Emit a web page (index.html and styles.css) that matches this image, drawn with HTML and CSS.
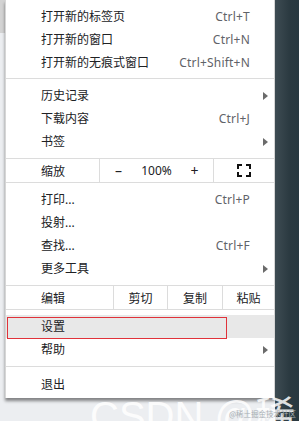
FILE: index.html
```html
<!DOCTYPE html>
<html lang="zh">
<head>
<meta charset="utf-8">
<link rel="stylesheet" href="styles.css">
</head>
<body>
<div class="screen">
  <div class="side-left"></div>
  <div class="main">
    <div class="menu">
      <div class="item"><span class="label">打开新的标签页</span><span class="key">Ctrl+T</span></div>
      <div class="item"><span class="label">打开新的窗口</span><span class="key">Ctrl+N</span></div>
      <div class="item"><span class="label">打开新的无痕式窗口</span><span class="key">Ctrl+Shift+N</span></div>
      <div class="sep"></div>
      <div class="item sub"><span class="label">历史记录</span><span class="arrow"></span></div>
      <div class="item"><span class="label">下载内容</span><span class="key">Ctrl+J</span></div>
      <div class="item sub"><span class="label">书签</span><span class="arrow"></span></div>
      <div class="row zoom">
        <div class="cell first">缩放</div>
        <div class="cell zoomctl"><span>–</span><span>100%</span><span>+</span></div>
        <div class="cell full">
          <svg width="14" height="13" viewBox="0 0 14 13"><path d="M1 5V1h4M9 1h4v4M13 8v4H9M5 12H1V8" fill="none" stroke="#111" stroke-width="2"/></svg>
        </div>
      </div>
      <div class="item"><span class="label">打印...</span><span class="key">Ctrl+P</span></div>
      <div class="item"><span class="label">投射...</span></div>
      <div class="item"><span class="label">查找...</span><span class="key">Ctrl+F</span></div>
      <div class="item sub"><span class="label">更多工具</span><span class="arrow"></span></div>
      <div class="row edit">
        <div class="cell first">编辑</div>
        <div class="cell c1">剪切</div>
        <div class="cell c2">复制</div>
        <div class="cell c3">粘贴</div>
      </div>
      <div class="item active"><span class="label">设置</span><span class="mark"></span></div>
      <div class="item sub"><span class="label">帮助</span><span class="arrow"></span></div>
      <div class="sep last"></div>
      <div class="item"><span class="label">退出</span></div>
    </div>
  </div>
  <div class="side-right"></div>
  <div class="wm-big">CSDN @稀土</div>
  <div class="wm-small">@稀土掘金技术社区</div>
</div>
</body>
</html>
```

FILE: styles.css
```css
* { box-sizing: border-box; }
html, body { margin: 0; padding: 0; }
body {
  width: 299px;
  height: 421px;
  overflow: hidden;
  font-family: "Noto Sans", "Noto Sans CJK SC", sans-serif;
  font-size: 12px;
  color: #202124;
}
.screen {
  position: relative;
  display: grid;
  grid-template-columns: 5px 270px 24px;
  height: 421px;
  overflow: hidden;
}
.side-left {
  background: linear-gradient(#d3d3d3 0, #d3d3d3 33px, #eceef1 33px);
}
.main {
  background: #eceef1;
}
.side-right {
  background: linear-gradient(90deg, #3e4c53, #2b3a41 60%, #283840);
}
.menu {
  background: #fff;
  border-left: 1px solid #d6d6d6;
  border-right: 1px solid #d6d6d6;
  padding: 5px 0 2px;
  box-shadow: 0 3px 3px rgba(0,0,0,0.45);
}
.item {
  position: relative;
  display: flex;
  align-items: center;
  height: 23px;
  padding: 0 24px 0 35px;
  line-height: 1;
}
.item .label { flex: 1; }
.item .key { color: #5f6368; letter-spacing: 0.2px; }
.item.sub { padding-right: 6px; }
.arrow {
  width: 0; height: 0;
  border-left: 5px solid #6b6b6b;
  border-top: 4px solid transparent;
  border-bottom: 4px solid transparent;
}
.item.active { background: #e8e8e8; margin-top: 4px; }
.mark {
  position: absolute;
  left: 1px; top: 2px;
  width: 220px; height: 22px;
  border: 1px solid #e0323a;
}
.sep {
  height: 1px;
  background: #dcdcdc;
  margin: 4px 0 5px;
}
.sep.last { margin: 5px 0 6px; }
.row {
  display: flex;
  height: 25px;
  border-top: 1px solid #dcdcdc;
  border-bottom: 1px solid #dcdcdc;
  margin: 5px 0;
}
.cell {
  display: flex;
  align-items: center;
  justify-content: center;
  border-left: 1px solid #dcdcdc;
}
.cell.first {
  justify-content: flex-start;
  padding-left: 35px;
  border-left: none;
}
.zoom .cell.first { width: 93px; }
.zoomctl {
  width: 114px;
  display: grid;
  grid-template-columns: 38px 38px 38px;
  justify-items: center;
}
.zoomctl span:first-child, .zoomctl span:last-child { font-size: 14px; }
.full { flex: 1; }
.edit .cell.first { width: 107px; }
.c1 { width: 54px; }
.c2 { width: 55px; }
.c3 { flex: 1; }
.wm-big {
  position: absolute;
  left: 90px;
  top: 396px;
  font-family: "Liberation Sans", "Noto Sans CJK SC", sans-serif;
  font-size: 40px;
  color: rgba(255,255,255,0.85);
  white-space: nowrap;
  line-height: 1;
  pointer-events: none;
}
.wm-small {
  position: absolute;
  z-index: 2;
  right: 3px;
  bottom: 2px;
  font-family: "Noto Sans CJK SC", sans-serif;
  font-size: 7.5px;
  color: #a7aeb3;
  white-space: nowrap;
}
```
